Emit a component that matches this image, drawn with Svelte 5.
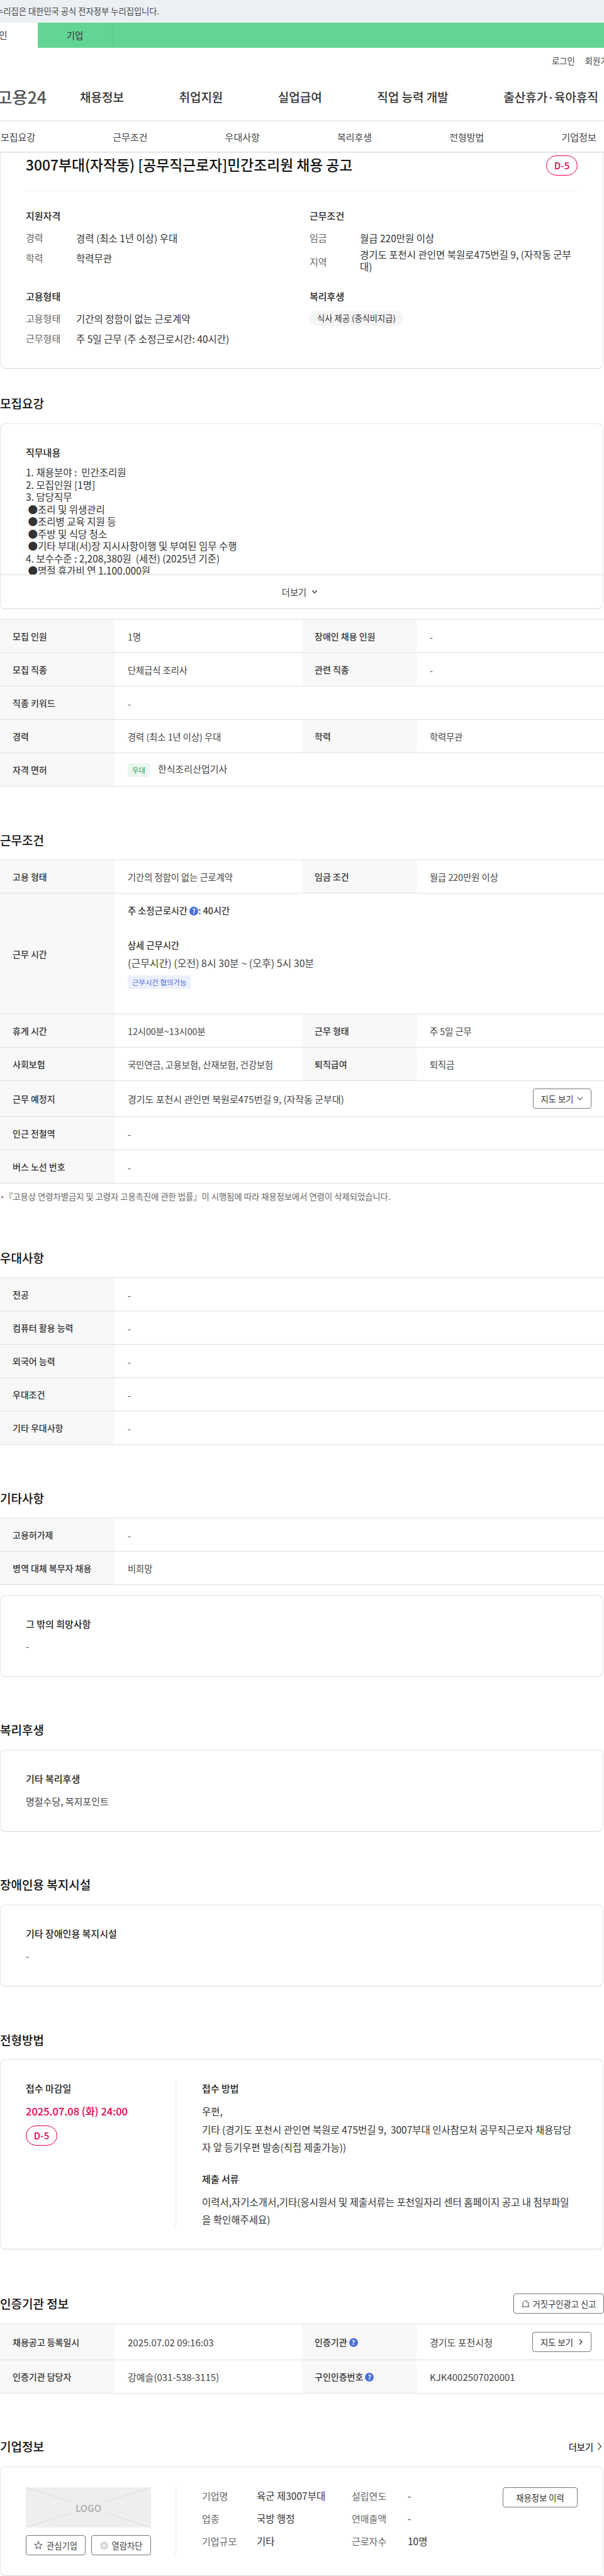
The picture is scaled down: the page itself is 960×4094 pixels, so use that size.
<script>
  const nav = ['채용정보', '취업지원', '실업급여', '직업 능력 개발', '출산휴가·육아휴직'];
  const tabs = ['모집요강', '근무조건', '우대사항', '복리후생', '전형방법', '기업정보'];
  const prefer = ['전공', '컴퓨터 활용 능력', '외국어 능력', '우대조건', '기타 우대사항'];
  const list = [
    '1. 채용분야 :  민간조리원',
    '2. 모집인원 [1명]',
    '3. 담당직무',
    ' ●조리 및 위생관리',
    ' ●조리병 교육 지원 등',
    ' ●주방 및 식당 청소',
    ' ●기타 부대(서)장 지시사항이행 및 부여된 임무 수행',
    '4. 보수수준 : 2,208,380원  (세전) (2025년 기준)',
    ' ●명절 휴가비 연 1,100,000원'
  ];
  const company = [
    ['기업명', '육군 제3007부대', '설립연도', '-'],
    ['업종', '국방 행정', '연매출액', '-'],
    ['기업규모', '기타', '근로자수', '10명']
  ];
</script>

<div class="page">
  <div class="gov-bar">누리집은 대한민국 공식 전자정부 누리집입니다.</div>
  <div class="user-tabs">
    <div class="user-tab active"><span>개인</span></div>
    <div class="user-tab">기업</div>
  </div>
  <div class="util"><span>로그인</span><span>회원가입</span></div>
  <header class="gnb">
    <div class="logo">고용24</div>
    {#each nav as item}
      <span class="gnb-item">{item}</span>
    {/each}
  </header>
  <nav class="tabs">
    {#each tabs as tab}
      <span>{tab}</span>
    {/each}
  </nav>

  <section class="card summary">
    <div class="summary-head">
      <h1>3007부대(자작동) [공무직근로자]민간조리원 채용 공고</h1>
      <span class="dday">D-5</span>
    </div>
    <div class="summary-grid">
      <div class="block">
        <h3>지원자격</h3>
        <dl>
          <dt>경력</dt><dd>경력 (최소 1년 이상) 우대</dd>
          <dt>학력</dt><dd>학력무관</dd>
        </dl>
      </div>
      <div class="block">
        <h3>근무조건</h3>
        <dl>
          <dt>임금</dt><dd>월급 220만원 이상</dd>
          <dt>지역</dt><dd class="tight">경기도 포천시 관인면 북원로475번길 9, (자작동 군부대)</dd>
        </dl>
      </div>
      <div class="block">
        <h3>고용형태</h3>
        <dl>
          <dt>고용형태</dt><dd>기간의 정함이 없는 근로계약</dd>
          <dt>근무형태</dt><dd>주 5일 근무 (주 소정근로시간: 40시간)</dd>
        </dl>
      </div>
      <div class="block">
        <h3>복리후생</h3>
        <span class="chip">식사 제공 (중식비지급)</span>
      </div>
    </div>
  </section>

  <h2 class="sec first">모집요강</h2>
  <section class="card job">
    <div class="job-body">
      <h3>직무내용</h3>
      <div class="job-list">
        {#each list as line}
          <div>{line}</div>
        {/each}
      </div>
    </div>
    <div class="more">더보기
      <svg width="10" height="8" viewBox="0 0 10 8"><path d="M1.500 1.500 5 5.500l3.500-4" fill="none" stroke="#333" stroke-width="1.400"/></svg>
    </div>
  </section>

  <table class="tbl t-recruit">
    <colgroup><col class="c-th"><col class="c-td"><col class="c-th"><col class="c-td"></colgroup>
    <tbody>
      <tr><th>모집 인원</th><td>1명</td><th>장애인 채용 인원</th><td>-</td></tr>
      <tr><th>모집 직종</th><td>단체급식 조리사</td><th>관련 직종</th><td>-</td></tr>
      <tr><th>직종 키워드</th><td colspan="3">-</td></tr>
      <tr><th>경력</th><td>경력 (최소 1년 이상) 우대</td><th>학력</th><td>학력무관</td></tr>
      <tr><th>자격 면허</th><td colspan="3"><span class="tag green">우대</span><span class="license">한식조리산업기사</span></td></tr>
    </tbody>
  </table>

  <h2 class="sec s-work">근무조건</h2>
  <table class="tbl">
    <colgroup><col class="c-th"><col class="c-td"><col class="c-th"><col class="c-td"></colgroup>
    <tbody>
      <tr><th>고용 형태</th><td>기간의 정함이 없는 근로계약</td><th>임금 조건</th><td>월급 220만원 이상</td></tr>
      <tr class="r-hours">
        <th>근무 시간</th>
        <td colspan="3" class="hours">
          <div class="hours-week">주 소정근로시간 <span class="help">?</span>: 40시간</div>
          <div class="hours-title">상세 근무시간</div>
          <div class="hours-time">(근무시간) (오전) 8시 30분 ~ (오후) 5시 30분</div>
          <span class="tag blue">근무시간 협의가능</span>
        </td>
      </tr>
      <tr><th>휴게 시간</th><td>12시00분~13시00분</td><th>근무 형태</th><td>주 5일 근무</td></tr>
      <tr><th>사회보험</th><td>국민연금, 고용보험, 산재보험, 건강보험</td><th>퇴직급여</th><td>퇴직금</td></tr>
      <tr class="r-place">
        <th>근무 예정지</th>
        <td colspan="3">
          <div class="place">
            <span>경기도 포천시 관인면 북원로475번길 9, (자작동 군부대)</span>
            <button class="btn map">지도 보기
              <svg width="10" height="8" viewBox="0 0 10 8"><path d="M1 1.500 5 6l4-4.500" fill="none" stroke="#333" stroke-width="1.100"/></svg>
            </button>
          </div>
        </td>
      </tr>
      <tr><th>인근 전철역</th><td colspan="3">-</td></tr>
      <tr><th>버스 노선 번호</th><td colspan="3">-</td></tr>
    </tbody>
  </table>
  <p class="note"><i></i>『고용상 연령차별금지 및 고령자 고용촉진에 관한 법률』이 시행됨에 따라 채용정보에서 연령이 삭제되었습니다.</p>

  <h2 class="sec s-prefer">우대사항</h2>
  <table class="tbl">
    <colgroup><col class="c-th"><col></colgroup>
    <tbody>
      {#each prefer as label}
        <tr><th>{label}</th><td>-</td></tr>
      {/each}
    </tbody>
  </table>

  <h2 class="sec s-etc">기타사항</h2>
  <table class="tbl">
    <colgroup><col class="c-th"><col></colgroup>
    <tbody>
      <tr><th>고용허가제</th><td>-</td></tr>
      <tr><th>병역 대체 복무자 채용</th><td>비희망</td></tr>
    </tbody>
  </table>
  <section class="card plain hope">
    <h3>그 밖의 희망사항</h3>
    <p>-</p>
  </section>

  <h2 class="sec s-welfare">복리후생</h2>
  <section class="card plain">
    <h3>기타 복리후생</h3>
    <p>명절수당, 복지포인트</p>
  </section>

  <h2 class="sec s-welfare">장애인용 복지시설</h2>
  <section class="card plain">
    <h3>기타 장애인용 복지시설</h3>
    <p>-</p>
  </section>

  <h2 class="sec s-apply">전형방법</h2>
  <section class="card apply">
    <div class="apply-left">
      <h3>접수 마감일</h3>
      <div class="deadline">2025.07.08 (화) 24:00</div>
      <span class="dday">D-5</span>
    </div>
    <div class="apply-right">
      <h3>접수 방법</h3>
      <p>우편,<br>기타 (경기도 포천시 관인면 북원로 475번길 9,  3007부대 인사참모처 공무직근로자 채용담당자 앞 등기우편 발송(직접 제출가능))</p>
      <h3 class="docs">제출 서류</h3>
      <p>이력서,자기소개서,기타(응시원서 및 제출서류는 포천일자리 센터 홈페이지 공고 내 첨부파일을 확인해주세요)</p>
    </div>
  </section>

  <div class="sec-row s-cert">
    <h2 class="sec">인증기관 정보</h2>
    <button class="btn report">
      <svg width="13" height="12" viewBox="0 0 13 12"><path d="M2 11V6a4.500 4.500 0 0 1 9 0v5M.5 11h12" fill="none" stroke="#444" stroke-width="1"/><path d="M7 3.500a2 2 0 0 1 1.500 2" fill="none" stroke="#444" stroke-width=".8"/></svg>
      거짓구인광고 신고
    </button>
  </div>
  <table class="tbl t-cert">
    <colgroup><col class="c-th"><col class="c-td"><col class="c-th"><col class="c-td"></colgroup>
    <tbody>
      <tr class="r-agency">
        <th>채용공고 등록일시</th>
        <td>2025.07.02 09:16:03</td>
        <th>인증기관 <span class="help">?</span></th>
        <td>
          <div class="place">
            <span>경기도 포천시청</span>
            <button class="btn map next">지도 보기
              <svg width="8" height="10" viewBox="0 0 8 10"><path d="M2 1l4 4-4 4" fill="none" stroke="#333" stroke-width="1.400"/></svg>
            </button>
          </div>
        </td>
      </tr>
      <tr>
        <th>인증기관 담당자</th>
        <td>강예슬(031-538-3115)</td>
        <th>구인인증번호 <span class="help">?</span></th>
        <td>KJK4002507020001</td>
      </tr>
    </tbody>
  </table>

  <div class="sec-row s-company">
    <h2 class="sec">기업정보</h2>
    <span class="more-link">더보기
      <svg width="8" height="14" viewBox="0 0 8 14"><path d="M1.500 1.500 6.500 7l-5 5.500" fill="none" stroke="#444" stroke-width="1.200"/></svg>
    </span>
  </div>
  <section class="card company">
    <div class="company-left">
      <div class="logo-box">
        <svg class="logo-x" width="199" height="64" viewBox="0 0 199 64"><path d="M0 0 199 64M199 0 0 64" stroke="#dcdcdc" stroke-width="1"/></svg>
        <span>LOGO</span>
      </div>
      <div class="company-btns">
        <button class="btn act">
          <svg width="14" height="14" viewBox="0 0 16 16"><path d="M8 1.500l2 4.400 4.700.5-3.500 3.200 1 4.700L8 11.900l-4.200 2.400 1-4.700L1.300 6.400 6 5.900z" fill="none" stroke="#555" stroke-width="1.200"/></svg>
          관심기업
        </button>
        <button class="btn act">
          <svg width="13" height="13" viewBox="0 0 15 15"><circle cx="7.500" cy="7.500" r="7.500" fill="#d8d8d8"/><path d="M5 5l5 5M10 5l-5 5" stroke="#fff" stroke-width="1.400"/></svg>
          열람차단
        </button>
      </div>
    </div>
    <div class="company-info">
      {#each company as row}
        <span class="ci-label">{row[0]}</span>
        <span class="ci-value">{row[1]}</span>
        <span class="ci-label">{row[2]}</span>
        <span class="ci-value">{row[3]}</span>
      {/each}
    </div>
    <button class="btn history">채용정보 이력</button>
  </section>
</div>

<style>
:global(body) {
  margin: 0;
  background: #fff;
  font-family: "Noto Sans CJK KR", "Noto Sans", sans-serif;
  color: #222;
}

.page {
  width: 960px;
  overflow: hidden;
  font-size: 14.250px;
}

h1, h2, h3, p, dl, dd {
  margin: 0;
}

.gov-bar {
  height: 36px;
  background: #eceff4;
  font-size: 13.300px;
  line-height: 35px;
  color: #444;
  text-indent: -7px;
  white-space: nowrap;
}

.user-tabs {
  display: flex;
  height: 40px;
  background: #62d595;
}

.user-tab {
  width: 118px;
  border-right: 1px solid #5ac98b;
  text-align: center;
  line-height: 40px;
  font-size: 14.500px;
  color: #333;
}

.user-tab.active {
  width: 60px;
  background: #fff;
  border: 0;
  text-align: left;
}

.user-tab.active span {
  display: block;
  margin-left: -15px;
}

.util {
  display: flex;
  gap: 16px;
  height: 40px;
  align-items: center;
  margin-left: 877px;
  white-space: nowrap;
  font-size: 13.300px;
  color: #444;
}

.gnb {
  display: flex;
  align-items: center;
  height: 77px;
  box-sizing: border-box;
  border-bottom: 2px solid #efefef;
  white-space: nowrap;
  font-size: 19px;
  font-weight: 500;
  color: #333;
}

.logo {
  flex: none;
  width: 132px;
  margin-left: -5px;
  font-size: 26.500px;
  font-weight: 500;
  color: #555;
}

.gnb-item {
  margin-right: 87.500px;
}

.tabs {
  display: flex;
  height: 48px;
  align-items: center;
  font-size: 15px;
  color: #444;
  box-shadow: 0 1px 2px rgba(0, 0, 0, 0.2);
  position: relative;
}

.tabs span {
  width: 178.300px;
  flex: none;
  padding-left: 1px;
  box-sizing: border-box;
}

.card {
  width: 959px;
  box-sizing: border-box;
  border: 1px solid #e4e4e4;
  border-bottom-color: #d8d8d8;
  border-radius: 8px;
  background: #fff;
}

.summary {
  height: 345px;
  padding: 6px 40px 0;
  border-top: 0;
  border-top-left-radius: 0;
  border-top-right-radius: 0;
}

.summary-head {
  display: flex;
  justify-content: space-between;
  align-items: flex-start;
  height: 56px;
  border-bottom: 1px solid #ececec;
}

h1 {
  font-size: 22.800px;
  font-weight: 500;
  line-height: 30px;
  color: #111;
}

.dday {
  display: inline-block;
  width: 50px;
  height: 32px;
  box-sizing: border-box;
  border: 1px solid #e6004d;
  border-radius: 16px;
  text-align: center;
  line-height: 29px;
  font-size: 15px;
  font-weight: 500;
  color: #e6004d;
}

.summary-grid {
  display: grid;
  grid-template-columns: 451px 1fr;
  grid-template-rows: 128px auto;
}

.block {
  padding-top: 28px;
}

h3 {
  font-size: 15px;
  font-weight: 500;
  line-height: 22px;
  color: #222;
}

dl {
  display: grid;
  grid-template-columns: 80px 1fr;
  align-items: center;
  row-gap: 10px;
  margin-top: 13px;
  font-size: 15px;
  line-height: 22px;
}

dt {
  color: #666;
}

dd {
  font-size: 15.500px;
  color: #333;
  word-break: break-all;
}

dd.tight {
  line-height: 19px;
  margin-top: -4px;
}

.chip {
  display: inline-block;
  margin-top: 12px;
  height: 24px;
  padding: 0 12px;
  border-radius: 12px;
  background: #f5f5f5;
  font-size: 13.300px;
  line-height: 23px;
  color: #333;
}

.sec {
  font-size: 19px;
  font-weight: 500;
  line-height: 28px;
  color: #111;
}

.first {
  margin-top: 41px;
  margin-bottom: 18px;
}

.job {
  height: 295px;
  overflow: hidden;
}

.job-body {
  height: 240px;
  padding: 34px 40px 0;
  box-sizing: border-box;
  overflow: hidden;
  border-bottom: 1px solid #dcdcdc;
}

.job-list {
  margin-top: 11px;
  white-space: pre;
  font-size: 15.500px;
  line-height: 19.500px;
  color: #333;
}

.more {
  height: 53px;
  display: flex;
  justify-content: center;
  align-items: center;
  gap: 8px;
  padding-right: 6px;
  font-size: 14.250px;
  color: #444;
}

.tbl {
  width: 960px;
  table-layout: fixed;
  border-collapse: separate;
  border-spacing: 0;
  border-top: 1px solid #e0e0e0;
}

.c-th {
  width: 182px;
}

.c-td {
  width: 298px;
}

.t-recruit {
  margin-top: 16px;
}

.tbl tr {
  height: 53px;
}

.tbl th,
.tbl td {
  border-bottom: 1px solid #e0e0e0;
}

.tbl th {
  padding: 0 0 0 20px;
  background: #f8f8f8;
  text-align: left;
  font-size: 14px;
  font-weight: 500;
  color: #333;
}

.tbl td {
  padding: 0 20px 0 21px;
  color: #444;
  font-size: 14.250px;
}

.tag {
  display: inline-block;
  vertical-align: middle;
  height: 22px;
  padding: 0 7px;
  border-radius: 3px;
  font-size: 11.400px;
  line-height: 22px;
}

.green {
  background: #e9f7ee;
  color: #2d9a5a;
}

.license {
  margin-left: 13px;
  font-size: 15px;
}

.blue {
  background: #eef1fd;
  color: #4a6ee0;
}

.s-work {
  margin-top: 71px;
  margin-bottom: 17px;
}

.tbl .r-hours {
  height: 192px;
}

.tbl td.hours {
  vertical-align: top;
  padding-top: 16px;
}

.hours-week {
  font-weight: 500;
  color: #333;
  line-height: 22px;
}

.help {
  display: inline-block;
  width: 14px;
  height: 14px;
  border-radius: 50%;
  background: #4a6ee0;
  color: #fff;
  font-size: 10px;
  font-weight: 700;
  line-height: 14px;
  text-align: center;
  vertical-align: 1px;
}

.hours-title {
  margin-top: 33px;
  font-weight: 500;
  line-height: 22px;
  color: #333;
}

.hours-time {
  margin-top: 6px;
  margin-bottom: 7px;
  font-size: 16px;
  line-height: 22px;
}

.tbl .r-place {
  height: 57px;
}

.place {
  display: flex;
  justify-content: space-between;
  align-items: center;
  font-size: 15px;
}

.btn {
  font: inherit;
  background: #fff;
  border: 1px solid #777;
  border-radius: 4px;
  color: #333;
  padding: 0;
  display: inline-flex;
  align-items: center;
  justify-content: center;
  gap: 6px;
}

.map {
  width: 93px;
  height: 32px;
  font-size: 13.300px;
  flex: none;
}

.next {
  width: 94px;
  gap: 8px;
}

.note {
  display: flex;
  align-items: center;
  gap: 2px;
  margin-top: 12px;
  padding-left: 2px;
  font-size: 13.300px;
  line-height: 18px;
  color: #666;
  white-space: nowrap;
}

.note i {
  width: 3px;
  height: 3px;
  border-radius: 50%;
  background: #666;
}

.s-prefer {
  margin-top: 74px;
  margin-bottom: 17px;
}

.s-etc {
  margin-top: 71px;
  margin-bottom: 17px;
}

.plain {
  height: 130px;
  padding: 34px 40px 0;
}

.plain p {
  margin-top: 14px;
  font-size: 15px;
  line-height: 22px;
  color: #444;
}

.hope {
  margin-top: 16px;
}

.s-welfare {
  margin-top: 70px;
  margin-bottom: 18px;
}

.s-apply {
  margin-top: 71px;
  margin-bottom: 17px;
}

.apply {
  height: 302px;
  display: flex;
  padding: 32px 40px 0;
}

.apply-left {
  width: 239px;
  height: 236px;
  padding-top: 2px;
  box-sizing: border-box;
  border-right: 1px solid #e8e8e8;
  flex: none;
}

.deadline {
  margin-top: 14px;
  margin-bottom: 12px;
  font-size: 16.500px;
  font-weight: 500;
  line-height: 22px;
  color: #e6004d;
}

.apply-right {
  padding: 2px 0 0 41px;
  flex: 1;
  min-width: 0;
}

.apply-right p {
  margin-top: 11px;
  font-size: 15.500px;
  line-height: 28.500px;
  color: #333;
  white-space: pre-wrap;
  word-break: break-all;
}

.docs {
  margin-top: 25px;
}

.sec-row {
  display: flex;
  justify-content: space-between;
  align-items: center;
  height: 32px;
}

.s-cert {
  margin-top: 70px;
  margin-bottom: 16px;
}

.report {
  width: 144px;
  height: 32px;
  font-size: 13.300px;
  gap: 5px;
}

.tbl .r-agency {
  height: 57px;
}

.t-cert td {
  font-size: 15px;
}

.s-company {
  margin-top: 68px;
  margin-bottom: 16px;
}

.more-link {
  display: inline-flex;
  align-items: center;
  gap: 6px;
  margin-right: 3px;
  font-size: 14.250px;
  font-weight: 500;
  color: #333;
}

.company {
  height: 174px;
  display: flex;
  padding: 32px 40px 0;
}

.company-left {
  width: 238px;
  height: 108px;
  border-right: 1px solid #e8e8e8;
  flex: none;
}

.logo-box {
  width: 199px;
  height: 64px;
  position: relative;
  background: #eee;
  display: flex;
  align-items: center;
  justify-content: center;
}

.logo-x {
  position: absolute;
  left: 0;
  top: 0;
}

.logo-box span {
  position: relative;
  padding: 0 7px;
  background: #eee;
  font-size: 15px;
  font-weight: 500;
  color: #aaa;
}

.company-btns {
  display: flex;
  justify-content: space-between;
  width: 199px;
  margin-top: 12px;
}

.act {
  width: 95px;
  height: 32px;
  font-size: 13.300px;
  color: #444;
}

.company-info {
  display: grid;
  grid-template-columns: 87px 151px 89px auto;
  grid-auto-rows: 36px;
  align-items: center;
  margin-left: 41px;
  margin-top: -5px;
  font-size: 15px;
  color: #333;
  height: 108px;
  flex: none;
  width: 400px;
}

.ci-label {
  color: #666;
}

.ci-value {
  font-size: 15.500px;
}

.history {
  width: 119px;
  height: 32px;
  font-size: 13.300px;
  margin-left: auto;
}
</style>
